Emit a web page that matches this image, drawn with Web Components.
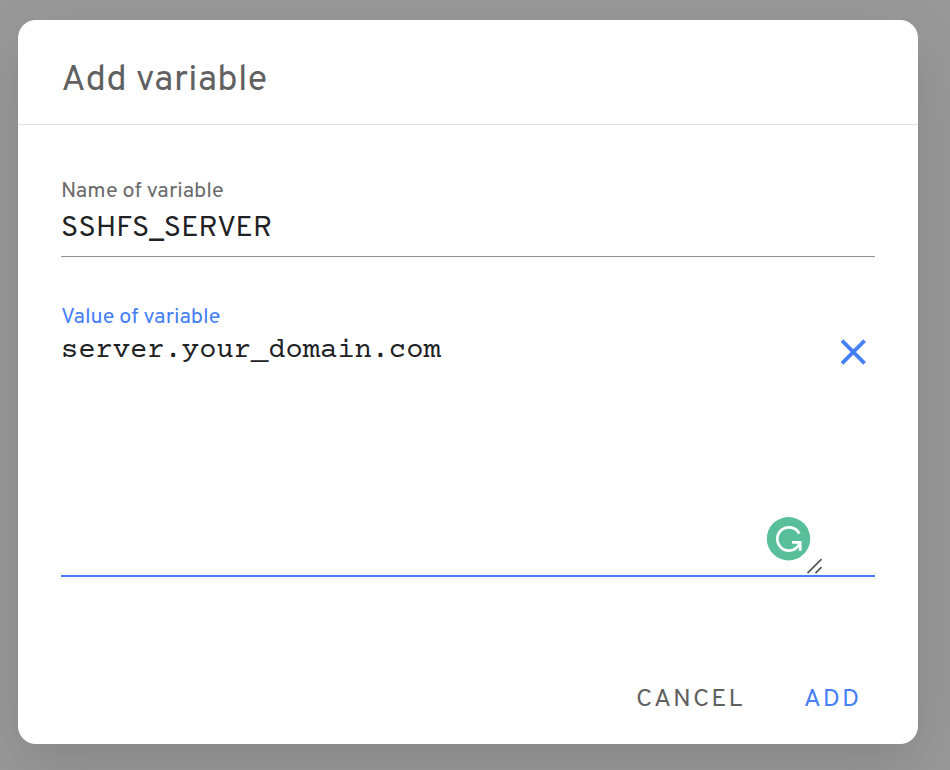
<!DOCTYPE html>
<html lang="en">
<head>
<meta charset="utf-8">
<title>Add variable</title>
<style>
html,body{margin:0;height:100%}
body{background:#999;font-family:Overpass,Roboto,"Liberation Sans",sans-serif;overflow:hidden}
</style>
</head>
<body>
<variable-dialog>
  <span slot="title">Add variable</span>
  <form-field label="Name of variable"><span>SSHFS_SERVER</span></form-field>
  <form-field label="Value of variable" active multiline>
    <span>server.your_domain.com</span>
    <clear-icon slot="suffix"></clear-icon>
    <grammar-badge slot="overlay"></grammar-badge>
  </form-field>
  <text-button slot="actions">CANCEL</text-button>
  <text-button slot="actions" primary>ADD</text-button>
</variable-dialog>
<script>
class Base extends HTMLElement{
  constructor(){super();this.attachShadow({mode:'open'}).innerHTML=this.view();}
}
customElements.define('variable-dialog',class extends Base{view(){return `
<style>
:host{display:block;box-sizing:border-box;height:770px;padding:20px 32px 26px 18px}
.card{box-sizing:border-box;width:900px;height:724px;background:#fff;border-radius:18px;display:flex;flex-direction:column;
box-shadow:0 18px 40px -10px rgba(0,0,0,.02),0 24px 76px 6px rgba(0,0,0,.1)}
header{box-sizing:border-box;height:105px;flex:none;border-bottom:1px solid #dfdfdf;padding:40px 44px 0 43.2px;font-size:36px;line-height:42px;letter-spacing:.45px;color:#616161}
main{padding:54px 43px 0;flex:1;display:flex;flex-direction:column;gap:48px}
footer{display:flex;justify-content:flex-end;gap:59px;padding:0 56.6px 29px 0}
</style>
<section class="card"><header><slot name="title"></slot></header><main><slot></slot></main><footer><slot name="actions"></slot></footer></section>`}});
customElements.define('form-field',class extends Base{
view(){return `
<style>
:host{display:block;position:relative;box-sizing:border-box;height:78px;border-bottom:1px solid #919191}
:host([active]){height:272px;border-bottom:2px solid #4680f8}
label{display:block;font-size:21.6px;line-height:26px;letter-spacing:0;color:#6b6b6b}
:host([active]) label{color:#4680f8}
.row{display:flex;justify-content:space-between;align-items:flex-start;color:#202124}
.value{font-size:28.8px;line-height:32px;letter-spacing:.22px;padding-top:8px}
:host([multiline]) .value{font:28.8px/32px "Nimbus Mono PS","Courier Prime","TeX Gyre Cursor",FreeMono,"Liberation Mono",monospace;letter-spacing:0;padding-top:4px}
.suffix{padding:8px 9px 0 0}
.over{position:absolute;left:705px;top:212px}
</style>
<label></label><div class="row"><div class="value"><slot></slot></div><div class="suffix"><slot name="suffix"></slot></div></div><div class="over"><slot name="overlay"></slot></div>`}
connectedCallback(){this.shadowRoot.querySelector('label').textContent=this.getAttribute('label');}
});
customElements.define('clear-icon',class extends Base{view(){return `
<style>:host{display:block;width:26px;height:26px}svg{display:block}</style>
<svg width="26" height="26" viewBox="0 0 26 26"><path d="M2 1.7 24.6 24.3M24.6 1.7 2 24.3" stroke="#4680f8" stroke-width="3.8"/></svg>`}});
customElements.define('grammar-badge',class extends Base{view(){return `
<style>:host{display:block}svg{display:block}</style>
<svg width="60" height="60" viewBox="0 0 60 60"><circle cx="22.5" cy="21.7" r="21.7" fill="#58bf9a"/>
<path d="M33.2 16.6A11.6 11.6 0 1 0 31.8 29.4L33.6 27" fill="none" stroke="#fff" stroke-width="2.7"/>
<path d="M26 25.4H34.2V33.8" fill="none" stroke="#fff" stroke-width="2.7"/>
<path d="M41.5 56.2 55.5 42.2M49.5 56.2 55.5 50.2" stroke="#555" stroke-width="1.7"/></svg>`}});
customElements.define('text-button',class extends Base{view(){return `
<style>:host{display:block;font-size:25.2px;line-height:30px;letter-spacing:2.25px;color:#616161}:host([primary]){color:#4680f8}</style><slot></slot>`}});
</script>
</body>
</html>
